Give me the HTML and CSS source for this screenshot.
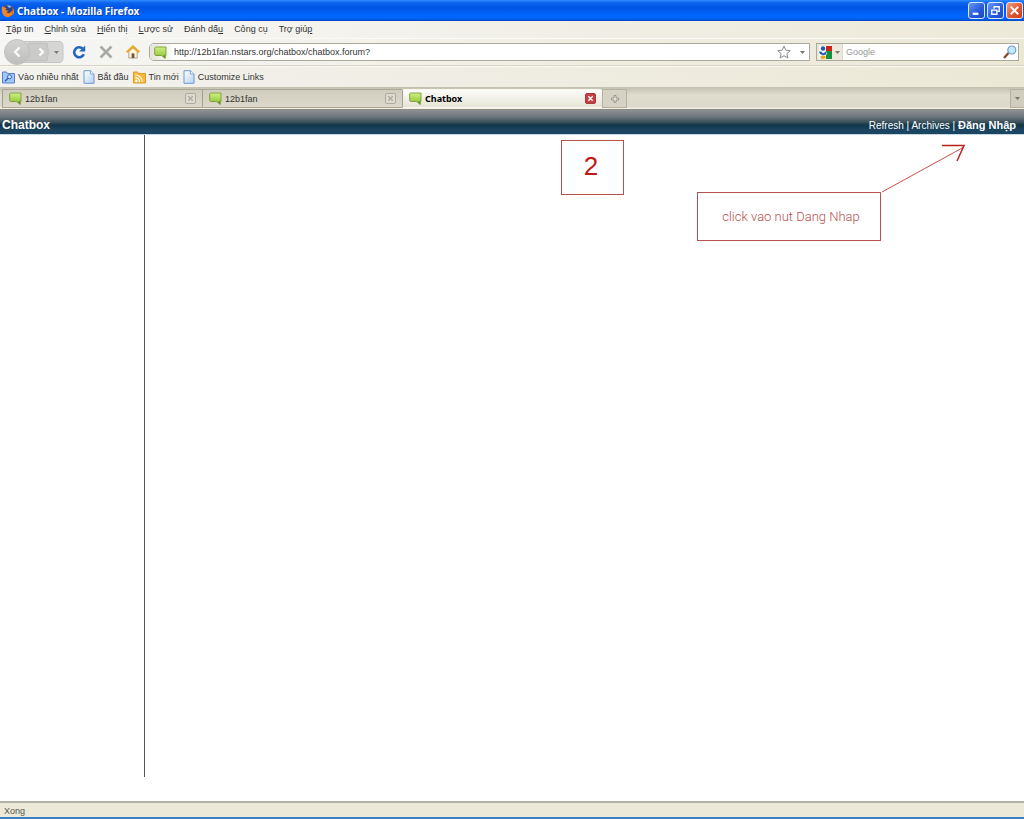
FILE: index.html
```html
<!DOCTYPE html>
<html lang="vi">
<head>
<meta charset="utf-8">
<title>Chatbox - Mozilla Firefox</title>
<link rel="stylesheet" href="styles.css">
</head>
<body>
<svg class="defs" aria-hidden="true">
  <defs>
    <linearGradient id="green" x1="0" y1="0" x2="0" y2="1"><stop offset="0" stop-color="#d0f084"/><stop offset="1" stop-color="#86c02c"/></linearGradient>
    <linearGradient id="paper" x1="0" y1="0" x2="1" y2="1"><stop offset="0" stop-color="#ffffff"/><stop offset="1" stop-color="#b4d2f6"/></linearGradient>
    <linearGradient id="disc" x1="0" y1="0" x2="0" y2="1"><stop offset="0" stop-color="#d4d4d2"/><stop offset="1" stop-color="#bebebc"/></linearGradient>
    <symbol id="bubble" viewBox="0 0 13 13"><path d="M1.500 1H12v8.500h-.8V12.500L7.500 9.500H1.500L.7 8.800V1.800z" fill="url(#green)" stroke="#7d9b3c" stroke-width=".9"/><path d="M9 9.500h2.200V12.300z" fill="#5f8427"/></symbol>
    <symbol id="page" viewBox="0 0 12 14"><path d="M1 .7h6.500L11 4v9.300H1z" fill="url(#paper)" stroke="#6f98d3"/><path d="M7.500.7V4H11" fill="#fff" stroke="#6f98d3" stroke-width=".8"/></symbol>
    <symbol id="cross" viewBox="0 0 11 11"><path d="M2.800 2.800l5.400 5.400M8.200 2.800L2.800 8.200" fill="none" stroke="currentColor" stroke-width="1.800"/></symbol>
    <symbol id="down" viewBox="0 0 5 3"><path d="M0 0h5L2.500 3z" fill="currentColor"/></symbol>
  </defs>
</svg>
<div class="window">
  <header class="titlebar">
    <svg class="fox" viewBox="0 0 14 14"><circle cx="7" cy="7" r="6" fill="#cf4a12"/><circle cx="7.500" cy="5" r="4" fill="#27448c"/><path d="M6 1.500c2-.8 4 .2 4.500 1.500L8 4z" fill="#7fb6ec"/><path d="M1 2l2 1.500 2.500.5-1 2 3 1-2 1.500c2 1.500 5 .5 6-2.500 1 5-3 7.500-6 7C2 12 0 8 1 2z" fill="#ee8526"/><path d="M11 3c2 2 2 6 0 8 2-.5 3-5 0-8z" fill="#ffd34a"/></svg>
    <h1 class="title">Chatbox - Mozilla Firefox</h1>
    <div class="controls">
      <button class="control" aria-label="Minimize"><svg viewBox="0 0 16 16"><path d="M4 11.500h6" stroke="#fff" stroke-width="2.500"/></svg></button>
      <button class="control" aria-label="Restore"><svg viewBox="0 0 16 16" fill="none" stroke="#fff"><path d="M6.500 6V4h5.500v5h-2" stroke-width="1.400"/><path d="M4 7.500h5.500v4.500H4z" stroke-width="1.400"/></svg></button>
      <button class="control control-close" aria-label="Close"><svg viewBox="0 0 16 16"><path d="M4 4l8 8M12 4l-8 8" stroke="#fff" stroke-width="1.900"/></svg></button>
    </div>
  </header>

  <nav class="menubar">
    <button><u>T</u>ập tin</button><button><u>C</u>hỉnh sửa</button><button><u>H</u>iển thị</button><button><u>L</u>ược sử</button><button>Đánh dấ<u>u</u></button><button>Côn<u>g</u> cụ</button><button>Trợ giú<u>p</u></button>
  </nav>

  <div class="toolbar">
    <div class="history">
      <svg class="history-shape" viewBox="0 0 62 26"><path d="M20 2.500h37q4 0 4 5v11q0 5-4 5H20z" fill="#d6d6d4" stroke="#c6c6c4"/><path d="M27 4h18q3 9 0 18H24z" fill="#cacac8" stroke="#b8b8b6" stroke-width=".6"/><circle cx="15" cy="13" r="12.500" fill="url(#disc)" stroke="#c0c0be"/><path d="M17.500 8.500L13 13l4.500 4.500M37.500 9.500l3.500 3.500-3.500 3.500" fill="none" stroke="#fff" stroke-width="2.200"/><path d="M52 12h5l-2.500 3z" fill="#7b7b7b"/></svg>
    </div>
    <button class="tool" aria-label="Refresh page"><svg viewBox="0 0 14 14"><path d="M11.800 9.300A5 5 0 1 1 10.500 3.500" fill="none" stroke="#2465bd" stroke-width="2.600"/><path d="M13.200 .5v6H7.200z" fill="#2465bd"/></svg></button>
    <button class="tool" aria-label="Stop"><svg viewBox="0 0 14 14"><path d="M1.500 1.500l11 11M12.500 1.500l-11 11" stroke="#a9a9a7" stroke-width="2.600"/></svg></button>
    <button class="tool" aria-label="Home"><svg viewBox="0 0 15 15"><path d="M3 7v7h9V7L7.500 3z" fill="#fff5d6" stroke="#8f8d83" stroke-width=".8"/><path d="M.8 7.800L7.500 1.500l6.700 6.300" fill="none" stroke="#eba820" stroke-width="2.200"/><path d="M6 9h3v5H6z" fill="#765238"/></svg></button>
    <div class="urlbox">
      <span class="site"><svg class="icon"><use href="#bubble"/></svg></span>
      <input class="url" type="text" aria-label="Address" value="http://12b1fan.nstars.org/chatbox/chatbox.forum?">
      <svg class="star" viewBox="0 0 14 14"><path d="M7 1l1.800 4.200 4.500.4-3.400 3 1 4.400L7 10.700 3.100 13l1-4.400-3.400-3 4.500-.4z" fill="#fff" stroke="#8a8a8a"/></svg>
      <svg class="arrow"><use href="#down"/></svg>
    </div>
    <div class="searchbox">
      <span class="engine"><svg class="google" viewBox="0 0 13 13"><path d="M7 0h6v5H7z" fill="#cf2418"/><path d="M7 5h6v8H7V9l1-1z" fill="#12923f"/><path d="M0 0h7v13H0z" fill="#f5f7fb"/><ellipse cx="4" cy="2.500" rx="2.200" ry="2.200" fill="#2458b8"/><path d="M0 5.500l2.500.3L4 7.500l3-2v3L4 9.300 1 8z" fill="#2458b8"/><ellipse cx="4" cy="11.200" rx="2.800" ry="1.700" fill="#eda722"/></svg><svg class="arrow"><use href="#down"/></svg></span>
      <input class="search" type="text" aria-label="Search" placeholder="Google">
      <svg class="lens" viewBox="0 0 14 14"><path d="M1 13l4.500-5" stroke="#8d4a2d" stroke-width="2.400"/><circle cx="8.800" cy="5" r="4" fill="#c5e7fa" stroke="#6d9fca" stroke-width="1.200"/></svg>
    </div>
  </div>

  <nav class="bookmarks">
    <a href="#"><svg class="mark" viewBox="0 0 13 13"><path d="M.5 1h4l1 1.500h7v9.500H.5z" fill="#a4c6f5" stroke="#547fca"/><circle cx="7.500" cy="5.800" r="2" fill="#d8e9ff" stroke="#2d5fb4"/><path d="M6 7.300l-3 3" stroke="#2d5fb4" stroke-width="1.400"/></svg>Vào nhiều nhất</a>
    <a href="#"><svg class="leaf"><use href="#page"/></svg>Bắt đầu</a>
    <a href="#"><svg class="mark" viewBox="0 0 13 13"><path d="M.5 1h4l1 1.500h7v9.500H.5z" fill="#f9b83c" stroke="#dd9a2a"/><circle cx="3.300" cy="10" r="1.200" fill="#fff"/><path d="M2.300 6.700a4.300 4.300 0 0 1 4.300 4.300M2.300 4a7 7 0 0 1 7 7" fill="none" stroke="#fff" stroke-width="1.200"/></svg>Tin mới</a>
    <a href="#"><svg class="leaf"><use href="#page"/></svg>Customize Links</a>
  </nav>

  <div class="tabs">
    <div class="tab"><svg class="icon"><use href="#bubble"/></svg><span class="label">12b1fan</span><button class="close" aria-label="Close tab"><svg><use href="#cross"/></svg></button></div>
    <div class="tab"><svg class="icon"><use href="#bubble"/></svg><span class="label">12b1fan</span><button class="close" aria-label="Close tab"><svg><use href="#cross"/></svg></button></div>
    <div class="tab tab-active"><svg class="icon"><use href="#bubble"/></svg><span class="label">Chatbox</span><button class="close" aria-label="Close tab"><svg><use href="#cross"/></svg></button></div>
    <button class="newtab" aria-label="New tab"><svg viewBox="0 0 8 8"><path d="M3 .5h2V3h2.500v2H5v2.500H3V5H.5V3H3z" fill="#e6e4da" stroke="#8a887e" stroke-width=".8"/></svg></button>
    <button class="alltabs" aria-label="List all tabs"><svg class="arrow"><use href="#down"/></svg></button>
  </div>

  <div class="chathead">
    <h2 class="chatname">Chatbox</h2>
    <div class="links"><a href="#">Refresh</a> | <a href="#">Archives</a> | <a class="login" href="#">Đăng Nhập</a></div>
  </div>

  <main class="chat">
    <aside class="members"></aside>
    <section class="messages"></section>
    <div class="note note-number">2</div>
    <div class="note note-text">click vao nut Dang Nhap</div>
    <svg class="pointer" viewBox="0 0 86 50" fill="none" stroke="#b8231f"><path d="M1 49L83 4" stroke-width=".8"/><path d="M61 2.500h22L76 18" stroke-width="1.500"/></svg>
  </main>

  <footer class="status"><span>Xong</span></footer>
</div>
</body>
</html>
```

FILE: styles.css
```css
* { box-sizing: border-box; }
body { margin: 0; font: 9px/12px "Liberation Sans", Arial, sans-serif; color: #333; background: #fff; }
button { margin: 0; padding: 0; border: 0; background: none; font: inherit; color: inherit; }
input { min-width: 0; padding: 0; border: 0; outline: 0; background: none; font: inherit; color: inherit; }
a { color: inherit; text-decoration: none; }
svg { display: block; flex: none; }
.defs { position: absolute; width: 0; height: 0; }
.window { display: flex; flex-direction: column; min-height: 100vh; }

.titlebar { display: flex; align-items: center; height: 21px; padding: 0 1px; background: linear-gradient(#2f8bff 0, #0a62ee 3px, #0055e5 8px, #0066ff 15px, #0066ff 18px, #0048c4); }
.fox { width: 14px; height: 14px; }
.title { flex: 1; margin: 0 0 0 2px; font: bold 10px/14px "Noto Sans", "Open Sans", sans-serif; color: #fff; text-shadow: 1px 1px #063fa8; }
.controls { display: flex; gap: 2px; }
.control { width: 17px; height: 17px; border: 1px solid #dce8ff; border-radius: 3px; background: linear-gradient(135deg, #6b98f5, #2459dc 60%, #1d4cc4); }
.control svg { width: 15px; height: 15px; }
.control-close { background: linear-gradient(135deg, #f09a80, #e0532e 60%, #c83d18); }

.menubar { display: flex; gap: 11px; height: 17px; padding: 0 6px 2px; background: linear-gradient(90deg, #f7f7f7, #ece9d8); }

.toolbar { display: flex; align-items: center; height: 28px; padding: 0 5px 0 2px; border-top: 1px solid #fafaf6; border-bottom: 1px solid #d8d5c6; background: linear-gradient(90deg, #f6f6f5, #ebe8d6); }
.history { width: 62px; height: 26px; margin-right: 8px; }
.history-shape { width: 62px; height: 26px; }
.tool { margin-right: 13px; }
.tool svg { width: 14px; height: 14px; }
.tool:nth-of-type(3) { margin-right: 9px; }
.urlbox { display: flex; flex: 1; align-items: center; height: 18px; padding-right: 4px; border: 1px solid #aaa99a; border-radius: 5px 0 0 5px; background: #fff; }
.site { display: flex; align-items: center; align-self: stretch; width: 22px; padding-left: 4px; border-radius: 4px 0 0 4px; background: linear-gradient(90deg, #e6e5dc, #fafaf6); }
.icon { width: 13px; height: 13px; }
.url { flex: 1; margin-left: 2px; }
.star { width: 14px; height: 14px; margin-right: 9px; }
.arrow { width: 5px; height: 3px; color: #77766f; }
.searchbox { display: flex; align-items: center; width: 203px; height: 18px; margin-left: 6px; border: 1px solid #aaa99a; background: #fff; }
.engine { display: flex; align-items: center; gap: 3px; align-self: stretch; width: 26px; padding-left: 2px; background: #ece9dc; border-right: 1px solid #dddbd0; }
.google { width: 13px; height: 13px; }
.search { flex: 1; margin-left: 3px; }
.search::placeholder { color: #999; opacity: 1; }
.lens { width: 14px; height: 14px; margin-right: 1px; }

.bookmarks { display: flex; align-items: center; gap: 4px; height: 21px; padding: 0 2px; border-top: 1px solid #f9f8f1; background: linear-gradient(90deg, #f3f2ee, #ebe8d6); }
.bookmarks a { display: flex; align-items: center; gap: 3px; white-space: nowrap; }
.mark { width: 13px; height: 13px; }
.leaf { width: 12px; height: 14px; }

.tabs { display: flex; align-items: flex-end; height: 23px; padding: 2px 0 1px 2px; border-bottom: 1px solid #8e8c7d; background: linear-gradient(#c2bfaf, #dfddcf 8px, #dcd9c9 20px, #f8f7f0 22px); }
.tab { display: flex; align-items: center; flex: 0 1 200px; height: 19px; padding: 0 6px; border: 1px solid #aaa797; border-left-color: #a29f90; border-right: 0; background: linear-gradient(#d0cdbf, #dcd9ca); }
.label { flex: 1; margin-left: 3px; }
.tab-active { border-color: #f8f7f0; border-left: 1px solid #a29f90; border-radius: 2px 2px 0 0; font-family: "Noto Sans", "Open Sans", sans-serif; font-weight: bold; color: #000; background: linear-gradient(#fcfcf9, #e6e4d6); }
.close { width: 11px; height: 11px; border: 1px solid #aeaca0; border-radius: 2px; color: #aeaca0; background: #dddbd0; }
.close svg { width: 9px; height: 9px; }
.tab-active .close { border-color: #a83d3d; color: #fff; background: #c73c3c; }
.newtab { display: flex; align-items: center; justify-content: center; width: 25px; height: 19px; border: 1px solid #b4b1a2; background: #d6d3c5; }
.newtab svg { width: 8px; height: 8px; }
.alltabs { display: flex; align-items: center; justify-content: center; width: 14px; height: 19px; margin-left: auto; border: 1px solid #b4b1a2; border-right: 0; background: #d0cdbf; }

.chathead { display: flex; align-items: center; justify-content: space-between; height: 24px; padding: 6px 8px 0 2px; font-size: 10px; line-height: 14px; color: #fff; background: linear-gradient(#8d9095, #717a80 6px, #3c525c 12px, #123648 15px, #1b4561 20px, #1b4561); }
.chatname { margin: 0; font-size: 12px; line-height: 14px; }
.login { font-weight: bold; font-size: 11px; }

.chat { position: relative; display: flex; flex: 1; padding-bottom: 24px; border-top: 1px solid #c6d8e4; }
.members { flex: 0 0 145px; border-right: 1px solid #555; }
.messages { flex: 1; }
.note { position: absolute; display: flex; align-items: center; justify-content: center; border: 1px solid #b8504e; color: #b8504e; }
.note-number { top: 5px; left: 561px; width: 63px; height: 55px; padding: 0 3px 4px 0; font-size: 26px; line-height: 30px; color: #c01814; }
.note-text { top: 57px; left: 697px; width: 184px; height: 49px; padding-left: 4px; font: 300 13px/16px Roboto, "Liberation Sans", sans-serif; }
.pointer { position: absolute; top: 8px; left: 881px; width: 86px; height: 50px; }

.status { height: 18px; padding: 2px 4px 0; border-top: 2px solid #b4b2a7; border-bottom: 2px solid #3f7fc4; background: #ece9d8; color: #555; }
.status span { display: block; height: 12px; line-height: 12px; }
```
